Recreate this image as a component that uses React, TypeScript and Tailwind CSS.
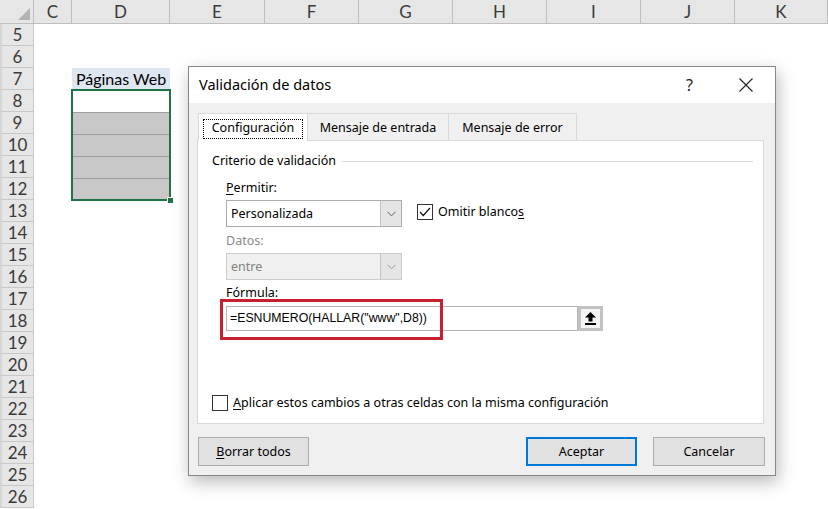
import React from 'react';

const cols = ['C', 'D', 'E', 'F', 'G', 'H', 'I', 'J', 'K'];
const rows = Array.from({ length: 22 }, (_, i) => i + 5);

function Chevron({ color = '#606060' }: { color?: string }) {
  return (
    <svg width="9" height="6" viewBox="0 0 9 6" fill="none">
      <path d="M0.5 0.8 L4.5 4.8 L8.5 0.8" stroke={color} strokeWidth="1" />
    </svg>
  );
}

function Combo({ value, disabled }: { value: string; disabled?: boolean }) {
  return (
    <div
      className={
        'flex h-[27px] w-[176px] border ' +
        (disabled ? 'border-[#cccccc] bg-[#f0f0f0] text-[#838383]' : 'border-[#adadad] bg-white text-black')
      }
    >
      <div className="flex flex-1 items-center pl-[4px] pt-[2px]">{value}</div>
      <div className="flex w-[21px] items-center justify-center border-l border-[#c4c4c4] bg-[#e5e5e5]">
        <Chevron color={disabled ? '#9a9a9a' : '#606060'} />
      </div>
    </div>
  );
}

function Sheet() {
  return (
    <div className="grid grid-cols-[34px_38px_98px_95px_94px_94px_94px_94px_94px_93px] grid-rows-[24px_repeat(22,22px)] font-['Lato',sans-serif] text-[#3b3b3b]">
      <div className="relative border-b border-r border-[#bfbfbf] bg-[#e6e6e6]">
        <svg className="absolute bottom-[3px] right-[3px]" width="12" height="12" viewBox="0 0 12 12">
          <polygon points="12,0 12,12 0,12" fill="#b3b3b3" />
        </svg>
      </div>
      {cols.map((c) => (
        <div
          key={c}
          className="flex items-center justify-center border-b border-r border-[#bfbfbf] bg-[#e6e6e6] text-[17px]"
        >
          {c}
        </div>
      ))}
      {rows.map((r) => (
        <React.Fragment key={r}>
          <div className="flex items-center justify-center border-b border-r border-l-2 border-[#c8c8c8] border-l-[#d6d6d6] bg-[#e6e6e6] text-[17px]">
            {r}
          </div>
          {cols.map((c) => {
            if (c === 'D' && r === 7) {
              return (
                <div key={c} className="flex items-center justify-center bg-[#dde6f1] text-[16px] text-black">
                  Páginas Web
                </div>
              );
            }
            if (c === 'D' && r === 8) {
              return (
                <div key={c} className="relative row-span-5 flex flex-col">
                  <div className="h-[22px] bg-white" />
                  {[0, 1, 2, 3].map((i) => (
                    <div key={i} className="h-[22px] border-t border-[#9e9e9e] bg-[#c8c8c8]" />
                  ))}
                  <div className="absolute -inset-[1px] border-2 border-[#217346]" />
                  <div className="absolute -bottom-[4px] -right-[4px] h-[7px] w-[7px] border border-white bg-[#217346]" />
                </div>
              );
            }
            if (c === 'D' && r > 8 && r <= 12) return null;
            return <div key={c} className="bg-white" />;
          })}
        </React.Fragment>
      ))}
    </div>
  );
}

function Dialog() {
  return (
    <div className="absolute left-[188px] top-[66px] flex h-[410px] w-[588px] flex-col border border-[#878787] bg-[#f0f0f0] font-['Noto_Sans',sans-serif] text-[12.5px] text-black shadow-[2px_6px_16px_rgba(0,0,0,0.28)]">
      <div className="flex h-[36px] items-center bg-white pl-[10px] pr-[22px]">
        <span className="flex-1 text-[14.5px]">Validación de datos</span>
        <span className="mr-[46px] text-[16px] text-[#222]">?</span>
        <svg width="14" height="14" viewBox="0 0 14 14">
          <path d="M0.5 0.5 L13.5 13.5 M13.5 0.5 L0.5 13.5" stroke="#222" strokeWidth="1.1" />
        </svg>
      </div>
      <div className="flex flex-col pl-[8px] pr-[11px] pt-[10px]">
        <div className="relative z-10 -mb-[1px] ml-[1px] flex h-[28px]">
          <div className="flex w-[110px] items-center justify-center border border-b-0 border-[#d9d9d9] bg-white pt-[2px]">
            <span className="flex h-[20px] w-[100px] items-center justify-center border border-dotted border-black">
              Configuración
            </span>
          </div>
          <div className="mb-[1px] flex w-[141px] items-center justify-center border border-b-0 border-l-0 border-[#d9d9d9] bg-[#f0f0f0] pt-[3px]">
            Mensaje de entrada
          </div>
          <div className="mb-[1px] flex w-[128px] items-center justify-center border border-b-0 border-l-0 border-[#d9d9d9] bg-[#f0f0f0] pt-[3px]">
            Mensaje de error
          </div>
        </div>
        <div className="flex h-[284px] flex-col border border-[#d9d9d9] bg-white">
          <div className="mt-[11px] flex h-[18px] items-center pl-[14px] pr-[10px]">
            <span>Criterio de validación</span>
            <div className="ml-[6px] h-px flex-1 bg-[#d9d9d9]" />
          </div>
          <div className="flex flex-col pl-[28px]">
            <div className="mt-[10px] flex h-[16px] items-center">
              <span>
                <span className="underline underline-offset-2">P</span>ermitir:
              </span>
            </div>
            <div className="mt-[4px] flex items-start">
              <Combo value="Personalizada" />
              <div className="ml-[15px] mt-[2px] flex items-center">
                <div className="flex h-[16px] w-[16px] items-center justify-center border border-[#333] bg-white">
                  <svg width="12" height="10" viewBox="0 0 12 10" fill="none">
                    <path d="M1 5 L4.3 8.5 L11 1" stroke="#111" strokeWidth="1.2" />
                  </svg>
                </div>
                <span className="ml-[5px] pt-[1px]">
                  Omitir blanco<span className="underline underline-offset-2">s</span>
                </span>
              </div>
            </div>
            <div className="mt-[6px] flex h-[16px] items-center text-[#8a8a8a]">Datos:</div>
            <div className="mt-[4px]">
              <Combo value="entre" disabled />
            </div>
            <div className="mt-[5px] flex h-[16px] items-center">Fórmula:</div>
            <div className="relative mt-[5px] flex h-[25px]">
              <div className="flex w-[352px] items-center border border-[#b4b4b4] bg-white pl-[3px] font-['Liberation_Sans',sans-serif] text-[12.3px]">
                =ESNUMERO(HALLAR("www",D8))
              </div>
              <div className="flex w-[25px] items-center justify-center border-[3px] border-[#c2c2c2] bg-[#f4f4f4]">
                <svg width="11" height="13" viewBox="0 0 11 13">
                  <polygon points="5.5,0 11,5.5 7.5,5.5 7.5,9.5 3.5,9.5 3.5,5.5 0,5.5" fill="#000" />
                  <rect x="0" y="11" width="11" height="2" fill="#000" />
                </svg>
              </div>
              <div className="absolute -left-[6px] -top-[7px] h-[41px] w-[223px] border-[3px] border-[#c8202f]" />
            </div>
          </div>
          <div className="mt-[64px] flex h-[16px] items-center pl-[14px]">
            <div className="h-[16px] w-[16px] border border-[#333] bg-white" />
            <span className="ml-[5px] pt-[1px]">
              <span className="underline underline-offset-2">A</span>plicar estos cambios a otras celdas con la misma configuración
            </span>
          </div>
        </div>
      </div>
      <div className="mt-[13px] flex h-[29px] pl-[9px] pr-[10px]">
        <button className="flex w-[111px] items-center justify-center border border-[#adadad] bg-[#e1e1e1] pt-[2px]">
          <span>
            <span className="underline underline-offset-2">B</span>orrar todos
          </span>
        </button>
        <div className="flex-1" />
        <button className="flex w-[111px] items-center justify-center border-2 border-[#0078d7] bg-[#e1e1e1] pt-[2px]">
          Aceptar
        </button>
        <button className="ml-[16px] flex w-[112px] items-center justify-center border border-[#adadad] bg-[#e1e1e1] pt-[2px]">
          Cancelar
        </button>
      </div>
    </div>
  );
}

export default function App() {
  return (
    <div className="relative h-[509px] w-[828px] overflow-hidden bg-white">
      <Sheet />
      <Dialog />
    </div>
  );
}
